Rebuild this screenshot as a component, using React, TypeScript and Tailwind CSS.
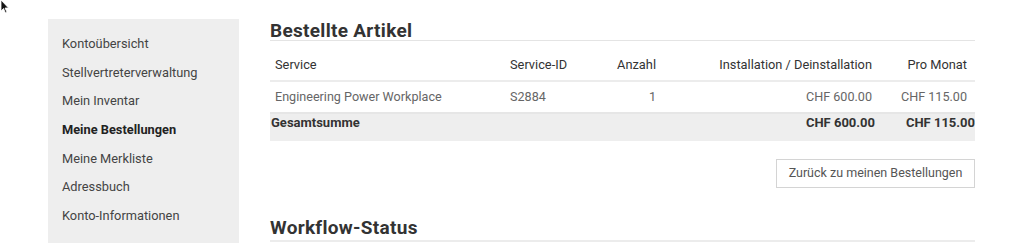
const navItems = [
  "Kontoübersicht",
  "Stellvertreterverwaltung",
  "Mein Inventar",
  "Meine Bestellungen",
  "Meine Merkliste",
  "Adressbuch",
  "Konto-Informationen",
];

const cols = "grid grid-cols-[240px_60px_86px_216px_103px]";

export default function App() {
  return (
    <div className="relative w-[1024px] h-[246px] bg-white overflow-hidden font-['Roboto',sans-serif]">
      {/* mouse pointer */}
      <svg className="absolute left-0 top-0" width="10" height="14" viewBox="0 0 10 14">
        <path d="M1 0 L1 11 L3.5 8.5 L5.5 13 L7 12.3 L5 8 L8.5 8 Z" fill="#111" stroke="#fff" strokeWidth="0.8" />
      </svg>

      <div className="flex pl-[48px] pt-[19px]">
        <aside className="w-[191px] h-[224px] bg-[#eeeeee] pt-[11px] pl-[14px]">
          {navItems.map((item) => (
            <div
              key={item}
              className={
                "h-[28.7px] leading-[28.7px] text-[12.8px] " +
                (item === "Meine Bestellungen" ? "font-bold text-[#222]" : "text-[#444]")
              }
            >
              {item}
            </div>
          ))}
        </aside>

        <main className="ml-[31px] w-[705px]">
          <h2 className="mt-[1px] h-[21px] leading-[22px] text-[19px] tracking-[0.3px] font-bold text-[#333] border-b border-[#e4e4e4]">
            Bestellte Artikel
          </h2>

          <div className={`${cols} h-[41px] pt-[14px] text-[12.8px] leading-[20px] text-[#333] border-b-2 border-[#ececec]`}>
            <div className="pl-[5px]">Service</div>
            <div>Service-ID</div>
            <div className="text-right">Anzahl</div>
            <div className="text-right">Installation / Deinstallation</div>
            <div className="text-right pr-[8px]">Pro Monat</div>
          </div>

          <div className={`${cols} h-[32px] pt-[5px] text-[12.6px] leading-[20px] text-[#666] border-b-2 border-[#e6e6e6]`}>
            <div className="pl-[5px]">Engineering Power Workplace</div>
            <div>S2884</div>
            <div className="text-right">1</div>
            <div className="text-right">CHF 600.00</div>
            <div className="text-right pr-[8px]">CHF 115.00</div>
          </div>

          <div className="grid grid-cols-[240px_60px_86px_219px_100px] h-[27px] bg-[#eeeeee] text-[13px] leading-[18px] font-bold text-[#333]">
            <div className="pl-[1px]">Gesamtsumme</div>
            <div />
            <div />
            <div className="text-right">CHF 600.00</div>
            <div className="text-right">CHF 115.00</div>
          </div>

          <div className="flex justify-end mt-[18px]">
            <button className="w-[199px] h-[29px] border border-[#d4d4d4] bg-white text-[12.5px] text-[#555]">
              Zurück zu meinen Bestellungen
            </button>
          </div>

          <h2 className="mt-[30px] h-[24px] leading-[20px] text-[19px] tracking-[0.3px] font-bold text-[#333] border-b-2 border-[#ececec]">
            Workflow-Status
          </h2>
        </main>
      </div>
    </div>
  );
}
